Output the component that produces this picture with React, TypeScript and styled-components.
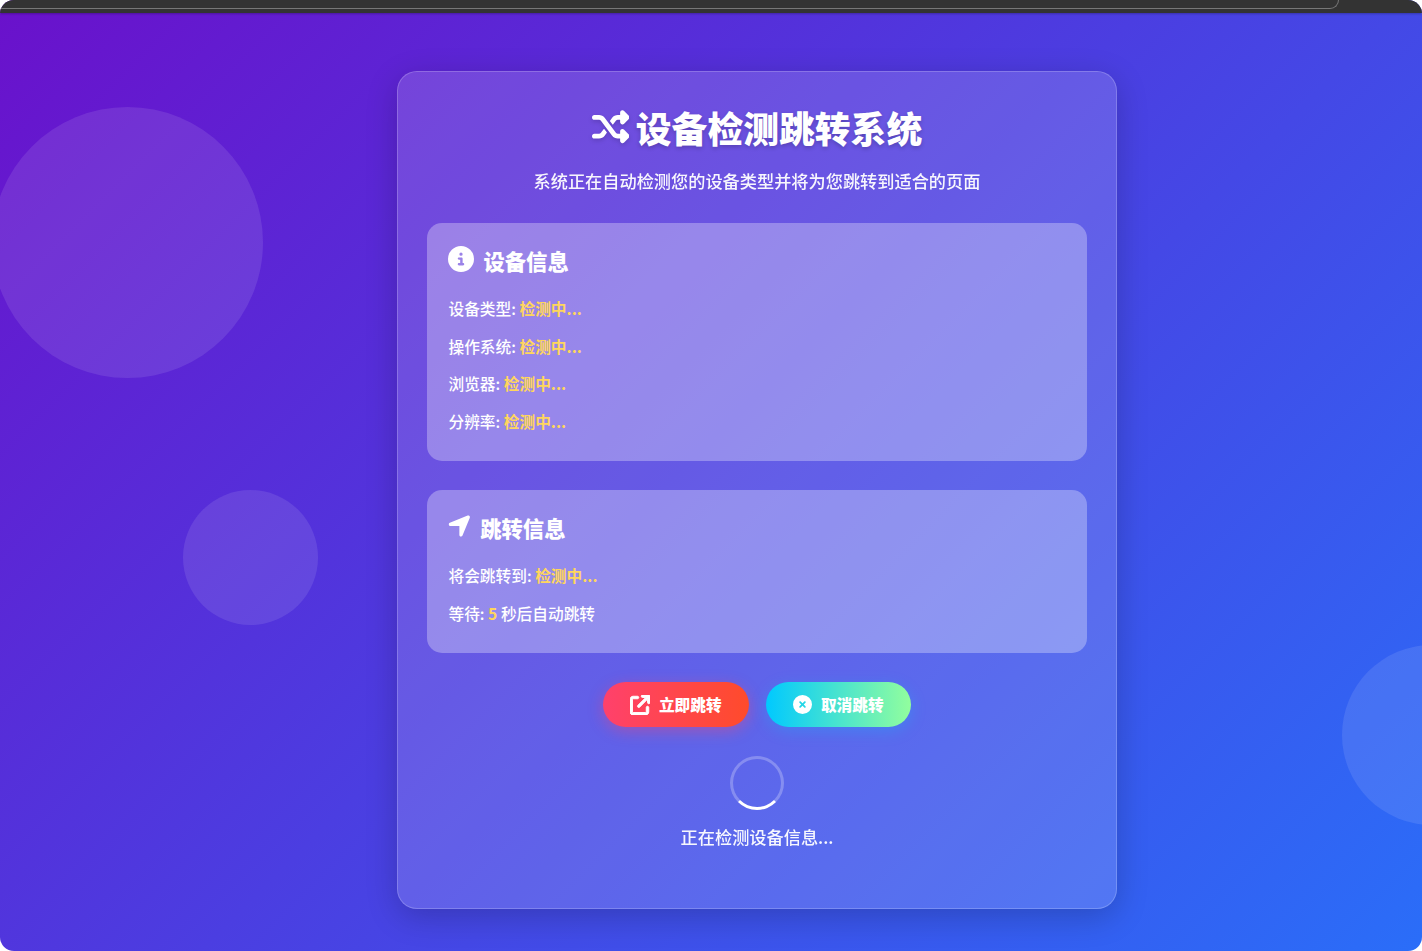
import React from 'react'
import styled, { createGlobalStyle } from 'styled-components'
import { FaArrowUpRightFromSquare, FaCircleInfo, FaCircleXmark, FaLocationArrow, FaShuffle } from 'react-icons/fa6'

const GlobalStyle = createGlobalStyle`
  html, body {
    margin: 0;
    padding: 0;
    background: #fff;
  }
  body {
    font-family: 'Noto Sans CJK SC', 'Noto Sans', sans-serif;
    color: #fff;
  }
`

const Frame = styled.div`
  width: 1422px;
  height: 951px;
  overflow: hidden;
  border-radius: 14px;
  display: flex;
  flex-direction: column;
  background: linear-gradient(135deg, #6a11cb 0%, #2575fc 108%);
  position: relative;
`

const BrowserBar = styled.div`
  height: 13px;
  flex: none;
  background: #333;
  box-shadow: 0 1px 2px rgba(0, 0, 0, 0.25);
`

const AddressEdge = styled.div`
  width: 1338px;
  height: 8px;
  border-bottom: 1px solid #777;
  border-right: 1px solid #777;
  border-bottom-right-radius: 12px;
`

const Circle = styled.div<{ $left: number; $top: number; $size: number }>`
  position: absolute;
  left: ${(p) => p.$left}px;
  top: ${(p) => p.$top}px;
  width: ${(p) => p.$size}px;
  height: ${(p) => p.$size}px;
  border-radius: 50%;
  background: rgba(255, 255, 255, 0.1);
`

const Main = styled.main`
  flex: 1;
  padding: 58px 0 0 397px;
  position: relative;
`

const Card = styled.section`
  width: 720px;
  height: 838px;
  box-sizing: border-box;
  padding: 28px 29px;
  background: rgba(255, 255, 255, 0.15);
  border: 1px solid rgba(255, 255, 255, 0.2);
  border-radius: 20px;
  box-shadow: 0 8px 32px rgba(0, 0, 0, 0.2);
  display: flex;
  flex-direction: column;
  align-items: stretch;
`

const Title = styled.h1`
  margin: 0;
  height: 54px;
  display: flex;
  align-items: center;
  justify-content: center;
  gap: 6.5px;
  font-size: 35.8px;
  font-weight: 900;
  line-height: 54px;
  text-shadow: 0 2px 4px rgba(0, 0, 0, 0.2);

  svg {
    width: 37.5px;
    height: 37.5px;
    filter: drop-shadow(0 2px 2px rgba(0, 0, 0, 0.15));
  }
`

const Subtitle = styled.p`
  margin: 14px 0 0;
  height: 26px;
  font-size: 17.2px;
  line-height: 26px;
  text-align: center;
  font-weight: 500;
  opacity: 0.95;
`

const InfoBox = styled.div<{ $height: number; $gapTop: number }>`
  height: ${(p) => p.$height}px;
  margin-top: ${(p) => p.$gapTop}px;
  box-sizing: border-box;
  padding: 19px 21px 0;
  background: rgba(255, 255, 255, 0.3);
  border-radius: 15px;
`

const BoxTitle = styled.h2<{ $iconWidth: number }>`
  margin: 0 0 10px;
  height: 38px;
  display: flex;
  align-items: center;
  gap: 9.5px;
  font-size: 21.3px;
  font-weight: 900;
  line-height: 38px;

  svg {
    height: 26px;
    width: ${(p) => p.$iconWidth}px;
    margin-top: -2px;
    margin-bottom: 2px;
  }
`

const Row = styled.p`
  margin: 0;
  height: 37.7px;
  font-size: 15.7px;
  line-height: 37.7px;
  font-weight: 500;
  padding-left: 0.5px;
`

const Highlight = styled.span`
  color: #ffd65c;
  font-weight: 700;
`

const Actions = styled.div`
  margin-top: 29px;
  display: flex;
  justify-content: center;
  gap: 17px;
`

const ActionButton = styled.button<{
  $from: string
  $to: string
  $shadow: string
  $width: number
  $iconSize: number
  $iconStroke: number
}>`
  width: ${(p) => p.$width}px;
  height: 45px;
  padding: 0;
  border: 0;
  border-radius: 23px;
  display: flex;
  align-items: center;
  justify-content: center;
  gap: 8.5px;
  color: #fff;
  font-family: inherit;
  font-size: 15.7px;
  font-weight: 900;
  background: linear-gradient(90deg, ${(p) => p.$from}, ${(p) => p.$to});
  box-shadow: 0 4px 15px ${(p) => p.$shadow};

  svg {
    width: ${(p) => p.$iconSize}px;
    height: ${(p) => p.$iconSize}px;
    stroke: currentColor;
    stroke-width: ${(p) => p.$iconStroke};
  }
`

const Spinner = styled.div`
  width: 54px;
  height: 54px;
  box-sizing: border-box;
  margin: 29px auto 0;
  border: 3.5px solid rgba(255, 255, 255, 0.25);
  border-bottom-color: #fff;
  border-radius: 50%;
`

const Status = styled.p`
  margin: 14px 0 0;
  height: 26px;
  font-size: 17.2px;
  line-height: 26px;
  text-align: center;
  font-weight: 500;
  opacity: 0.95;
`

const App = () => (
  <>
    <GlobalStyle />
    <Frame>
      <BrowserBar>
        <AddressEdge />
      </BrowserBar>
      <Circle $left={-8} $top={107} $size={271} />
      <Circle $left={183} $top={490} $size={135} />
      <Circle $left={1342} $top={645} $size={180} />
      <Main>
        <Card>
          <Title>
            <FaShuffle />
            设备检测跳转系统
          </Title>
          <Subtitle>系统正在自动检测您的设备类型并将为您跳转到适合的页面</Subtitle>
          <InfoBox $height={238} $gapTop={29}>
            <BoxTitle $iconWidth={26}>
              <FaCircleInfo />
              设备信息
            </BoxTitle>
            <Row>设备类型: <Highlight>检测中...</Highlight></Row>
            <Row>操作系统: <Highlight>检测中...</Highlight></Row>
            <Row>浏览器: <Highlight>检测中...</Highlight></Row>
            <Row>分辨率: <Highlight>检测中...</Highlight></Row>
          </InfoBox>
          <InfoBox $height={163} $gapTop={29}>
            <BoxTitle $iconWidth={22.75}>
              <FaLocationArrow />
              跳转信息
            </BoxTitle>
            <Row>将会跳转到: <Highlight>检测中...</Highlight></Row>
            <Row>等待: <Highlight>5</Highlight> 秒后自动跳转</Row>
          </InfoBox>
          <Actions>
            <ActionButton
              $width={146}
              $iconSize={20}
              $iconStroke={24}
              $from="#ff416c"
              $to="#ff4b2b"
              $shadow="rgba(255, 65, 108, 0.4)"
            >
              <FaArrowUpRightFromSquare />
              立即跳转
            </ActionButton>
            <ActionButton
              $width={145}
              $iconSize={19}
              $iconStroke={0}
              $from="#00c9ff"
              $to="#92fe9d"
              $shadow="rgba(0, 201, 255, 0.25)"
            >
              <FaCircleXmark />
              取消跳转
            </ActionButton>
          </Actions>
          <Spinner />
          <Status>正在检测设备信息...</Status>
        </Card>
      </Main>
    </Frame>
  </>
)

export default App
